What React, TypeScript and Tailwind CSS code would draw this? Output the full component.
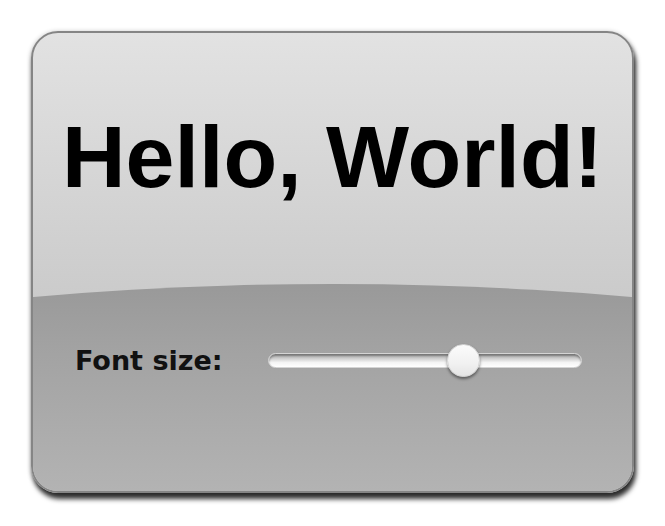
import { useState } from 'react'

export default function App() {
  const [fontSize] = useState(62)

  return (
    <div className="min-h-[526px] w-[665px] bg-white pl-[31px] pt-[31px]">
      <div className="flex h-[462px] w-[603px] flex-col overflow-hidden rounded-[27px] border-2 border-[#858585] bg-[linear-gradient(#e2e2e2,#cbcbcb_264px)] shadow-[2px_6px_5px_rgba(0,0,0,0.8),0_1px_5px_rgba(0,0,0,0.3)]">
        {/* Title area */}
        <div className="h-[251px] pt-[80px] text-center">
          <h1 className="text-[88px] leading-none font-bold text-black [font-family:'Liberation_Sans',Arial,sans-serif]">
            Hello, World!
          </h1>
        </div>

        {/* Controls area with curved top edge */}
        <div className="flex-1 bg-[linear-gradient(#999999,#a2a2a2_30%,#b3b3b3)] pt-[60px] [clip-path:ellipse(1030px_300px_at_50%_300px)]">
          <div className="flex h-[33px] items-center pl-[42px]">
            <label className="w-[193px] text-[27px] leading-none font-bold text-[#111] [font-family:'DejaVu_Sans',sans-serif]">
              Font size:
            </label>
            <div className="relative h-[33px] w-[314px]">
              <div className="mt-[9px] h-[15px] rounded-full border border-[#d4d4d4] bg-[linear-gradient(#a6a6a6,#cfcfcf_35%,#f4f4f4_65%,#ffffff)] shadow-[inset_0_2px_2px_rgba(0,0,0,0.3)]" />
              <div
                className="absolute top-0 h-[33px] w-[33px] rounded-full border border-[#d6d6d6] bg-[linear-gradient(#fbfbfb,#f1f1f1_60%,#e4e4e4)] shadow-[0_2px_3px_rgba(0,0,0,0.45)]"
                style={{ left: `calc(${fontSize}% - 16px)` }}
              />
            </div>
          </div>
        </div>
      </div>
    </div>
  )
}
